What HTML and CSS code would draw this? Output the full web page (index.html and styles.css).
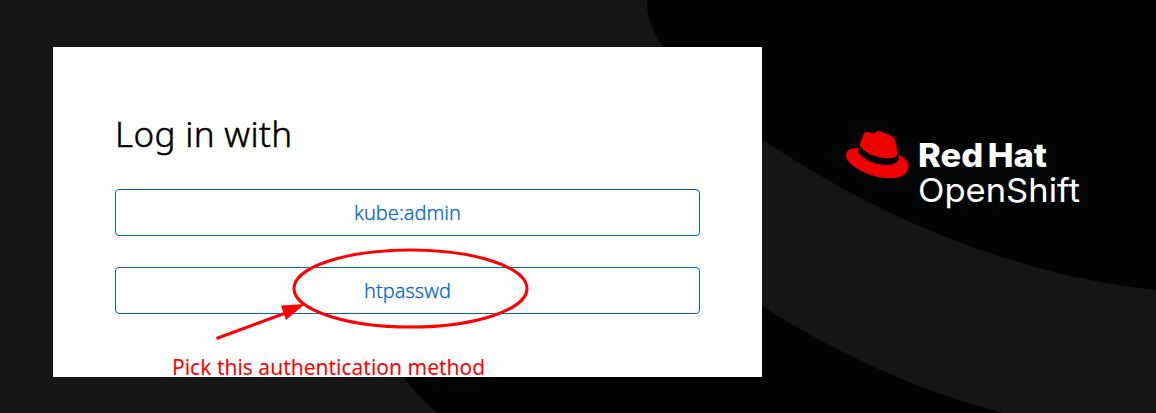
FILE: index.html
```html
<!DOCTYPE html>
<html lang="en">
<head>
<meta charset="utf-8">
<title>Log in with</title>
<link rel="stylesheet" href="styles.css">
</head>
<body>
<div class="page">
  <svg class="backdrop" viewBox="0 0 1156 413" aria-hidden="true">
    <path d="M647 0C646 17 652 30 663 47C690 84 724 111 762 139C884 222 1022 276 1156 290V0Z"/>
    <path d="M403 377Q418 396 437 413H1002Q876 379 762 306L600 200L390 350Z"/>
  </svg>
  <main class="card">
    <h1 class="title">Log in with</h1>
    <div class="providers">
      <a class="provider">kube:admin</a>
      <a class="provider">htpasswd</a>
    </div>
    <p class="note">Pick this authentication method</p>
    <svg class="annotation" viewBox="0 0 709 330" aria-hidden="true">
      <ellipse cx="357.5" cy="241.5" rx="116.5" ry="38.5"/>
      <path class="shaft" d="M163.500 291.500L238 264"/>
      <path class="head" d="M228 258.500L252 257L233 273Z"/>
    </svg>
  </main>
  <aside class="brand">
    <svg class="hat" viewBox="0 2.920 24 18.160" aria-hidden="true"><path d="M16.009 13.386c1.577 0 3.86-.326 3.86-2.202a1.765 1.765 0 0 0-.04-.431l-.94-4.08c-.216-.898-.406-1.305-1.982-2.093-1.223-.625-3.888-1.658-4.676-1.658-.733 0-.947.946-1.822.946-.842 0-1.467-.706-2.255-.706-.757 0-1.25.515-1.63 1.576 0 0-1.06 2.99-1.197 3.424a.81.81 0 0 0-.028.245c0 1.162 4.577 4.974 10.71 4.974m4.101-1.435c.218 1.032.218 1.14.218 1.277 0 1.765-1.984 2.745-4.593 2.745-5.895.004-11.06-3.451-11.06-5.734a2.326 2.326 0 0 1 .19-.925C2.746 9.415 0 9.794 0 12.217c0 3.969 9.405 8.861 16.851 8.861 5.71 0 7.149-2.582 7.149-4.62 0-1.605-1.387-3.425-3.887-4.512"/></svg>
    <svg class="wordmark" viewBox="0 0 166 72">
      <text class="strong" x="-1" y="28.500" textLength="129" lengthAdjust="spacingAndGlyphs">Red Hat</text>
      <text class="light" x="-1" y="64" textLength="162" lengthAdjust="spacingAndGlyphs">OpenShift</text>
    </svg>
  </aside>
</div>
</body>
</html>
```
FILE: styles.css
```css
* { box-sizing: border-box; }
body { margin: 0; background: #151515; }
.page {
  position: relative;
  display: flex;
  align-items: flex-start;
  width: 1156px;
  height: 413px;
  padding: 47px 0 0 53px;
  overflow: hidden;
  font-family: "Noto Sans", sans-serif;
}
.backdrop { position: absolute; inset: 0; width: 1156px; height: 413px; fill: #020303; }
.card {
  position: relative;
  flex: none;
  width: 709px;
  height: 330px;
  padding: 62px 62px 0;
  background: #fff;
}
.title { margin: 0; height: 52px; font: 300 35px/50px "Noto Sans", sans-serif; color: #000; letter-spacing: 0.35px; -webkit-text-stroke: 0.5px #000; }
.providers { display: flex; flex-direction: column; gap: 31px; margin-top: 28px; }
.provider {
  height: 47px;
  border: 1px solid #06c;
  border-radius: 4px;
  font: 300 20px/46px "Noto Sans", sans-serif;
  -webkit-text-stroke: 0.25px #06c;
  text-align: center;
  color: #06c;
}
.note { margin: 38px 0 0 57px; font-size: 21px; line-height: 30px; white-space: nowrap; color: #f00; }
.annotation { position: absolute; inset: 0; width: 709px; height: 330px; fill: none; stroke: #f00; stroke-width: 3; }
.annotation .head { fill: #f00; stroke: none; }
.brand { position: relative; display: flex; align-items: flex-start; gap: 10px; margin: 84px 0 0 84px; }
.hat { width: 62.500px; height: 47.300px; fill: #e00; }
.wordmark { width: 166px; height: 72px; margin-top: 7px; overflow: visible; fill: #fff; }
.strong { font: 800 33px Inter, sans-serif; word-spacing: -3px; }
.light { font: 400 33px Inter, sans-serif; }
```
